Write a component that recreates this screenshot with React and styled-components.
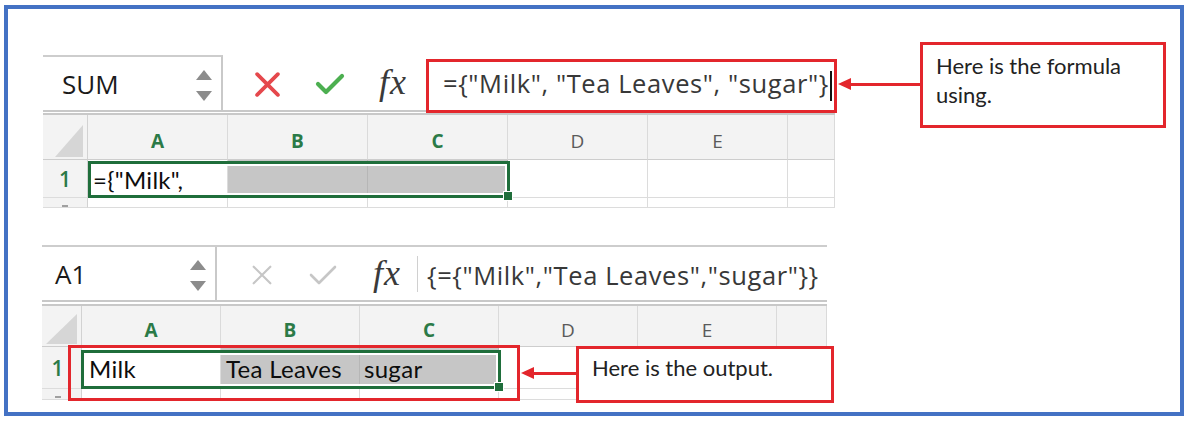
import React from "react"
import styled, { createGlobalStyle } from "styled-components"

const GlobalStyle = createGlobalStyle`
  body {
    margin: 0;
    background: #fff;
    font-family: "Open Sans", "Liberation Sans", sans-serif;
  }
`

const RED = "#e3262c"
const GREEN = "#1f6e3b"
const HEAD_GREEN = "#2b7a47"

const Frame = styled.div`
  position: relative;
  box-sizing: border-box;
  width: 1180px;
  height: 411px;
  margin: 5px 0 0 4px;
  border: 4px solid #4472c4;
  padding: 46px 0 0 35px;
  display: flex;
  flex-direction: column;
  gap: 37px;
`

const Sheet = styled.div`
  width: ${p => p.$w}px;
  margin-left: ${p => p.$shift || 0}px;
  display: flex;
  flex-direction: column;
`

const Bar = styled.div`
  box-sizing: border-box;
  display: flex;
  align-items: center;
  height: ${p => p.$h}px;
  border-top: ${p => (p.$line ? "2px solid #cdcdcd" : "none")};
`

const NameBox = styled.div`
  box-sizing: border-box;
  align-self: stretch;
  width: ${p => p.$w}px;
  display: flex;
  align-items: center;
  justify-content: space-between;
  padding: 0 ${p => p.$padR}px 0 ${p => p.$padL}px;
  border-right: 2px solid #c9c9c9;
  border-top: ${p => (p.$top ? "2px solid #cdcdcd" : "none")};
  font-size: 26px;
  color: #1a1a1a;
`

const Spinner = styled.div`
  display: flex;
  flex-direction: column;
  gap: 11px;
  padding-top: 3px;
`

const Tri = styled.span`
  width: 0;
  height: 0;
  border-left: 8px solid transparent;
  border-right: 8px solid transparent;
  ${p => (p.$down ? "border-top: 10px solid #8c8c8c;" : "border-bottom: 10px solid #8c8c8c;")}
`

const Controls = styled.div`
  display: flex;
  align-items: center;
  gap: ${p => p.$gap}px;
  padding-left: ${p => p.$pad}px;
  padding-top: 3px;
`

const Fx = styled.span`
  font-family: "Liberation Serif", "DejaVu Serif", serif;
  font-style: italic;
  font-size: 36px;
  line-height: 1;
  color: #3a3a3a;
  letter-spacing: 1px;
  margin-top: -4px;
`

const Sep = styled.span`
  width: 1px;
  height: 36px;
  margin: 0 9px 0 16px;
  background: #d0d0d0;
`

const FormulaText = styled.span`
  margin-left: ${p => p.$ml || 0}px;
  font-size: 25.5px;
  color: #383838;
  white-space: nowrap;
  letter-spacing: ${p => p.$ls || 0}px;
  padding-top: 2px;
`

const Caret = styled.span`
  display: inline-block;
  width: 2px;
  height: 30px;
  margin-left: 1px;
  background: #111;
  vertical-align: middle;
`

const Divider = styled.div`
  box-sizing: border-box;
  height: ${p => p.$h}px;
  border-top: 2px solid #c8c8c8;
  border-bottom: 2px solid #c8c8c8;
`

const Grid = styled.div`
  display: grid;
  grid-template-columns: ${p => p.$rh}px repeat(5, ${p => p.$cw}px) 1fr;
  grid-template-rows: ${p => p.$rows};
`

const Corner = styled.div`
  grid-row: 1;
  grid-column: 1;
  box-sizing: border-box;
  display: flex;
  align-items: flex-end;
  justify-content: flex-end;
  padding: 0 4px 2px 0;
  background: #f3f3f3;
  border-right: 1px solid #d2d2d2;
  border-bottom: 1px solid #cdcdcd;
`

const HeadCell = styled.div`
  grid-row: 1;
  grid-column: ${p => p.$c};
  box-sizing: border-box;
  display: flex;
  align-items: center;
  justify-content: center;
  padding-top: 8px;
  background: #f3f3f3;
  border-right: 1px solid #dadada;
  border-bottom: 1px solid #cdcdcd;
  font-size: 19px;
  font-weight: ${p => (p.$on ? 700 : 400)};
  color: ${p => (p.$on ? HEAD_GREEN : "#5a5a5a")};
`

const RowHead = styled.div`
  grid-row: ${p => p.$r};
  grid-column: 1;
  box-sizing: border-box;
  display: flex;
  align-items: ${p => (p.$cut ? "flex-start" : "center")};
  justify-content: center;
  padding: ${p => (p.$cut ? "7px" : "2px")} ${p => p.$padR || 0}px 0 0;
  overflow: hidden;
  background: #f3f3f3;
  border-right: 1px solid #d2d2d2;
  border-bottom: 1px solid #dcdcdc;
  font-size: 21px;
  font-weight: 600;
  line-height: 1;
  color: ${HEAD_GREEN};
`

const CutMark = styled.span`
  width: 6px;
  height: 2px;
  background: #a0a0a0;
`

const Cell = styled.div`
  grid-row: ${p => p.$r};
  grid-column: ${p => p.$c};
  box-sizing: border-box;
  display: flex;
  align-items: center;
  padding: 2px 0 0 ${p => p.$pl || 6}px;
  overflow: hidden;
  white-space: nowrap;
  background: ${p => (p.$shade ? "#c6c6c6" : "#fff")};
  border-right: 1px solid ${p => (p.$shade ? "#b6b6b6" : "#dcdcdc")};
  border-bottom: 1px solid #dcdcdc;
  font-family: "Lato", "Open Sans", sans-serif;
  font-size: 24px;
  color: #0d0d0d;
  letter-spacing: 0.3px;
`

const Selection = styled.div`
  grid-row: 2;
  grid-column: 2 / 5;
  position: relative;
  z-index: 2;
  margin: ${p => p.$m};
  border: 3px solid ${GREEN};
  box-shadow: inset 0 0 0 2px #fff;
`

const Handle = styled.span`
  position: absolute;
  right: -6px;
  bottom: -6px;
  width: 8px;
  height: 8px;
  background: ${GREEN};
  border: 1px solid #fff;
`

const RedBox = styled.div`
  position: absolute;
  z-index: 5;
  box-sizing: border-box;
  left: ${p => p.$x}px;
  top: ${p => p.$y}px;
  width: ${p => p.$w}px;
  height: ${p => p.$h}px;
  border: 3px solid ${RED};
`

const Arrow = styled.div`
  position: absolute;
  z-index: 5;
  display: flex;
  align-items: center;
  left: ${p => p.$x}px;
  top: ${p => p.$y}px;
  width: ${p => p.$w}px;
  height: 14px;
`

const Head = styled.span`
  width: 0;
  height: 0;
  border-top: 6px solid transparent;
  border-bottom: 6px solid transparent;
  border-right: 13px solid ${RED};
`

const Shaft = styled.span`
  flex: 1;
  height: 3px;
  background: ${RED};
`

const Callout = styled.div`
  position: absolute;
  z-index: 6;
  box-sizing: border-box;
  left: ${p => p.$x}px;
  top: ${p => p.$y}px;
  width: ${p => p.$w}px;
  height: ${p => p.$h}px;
  padding: ${p => p.$pt}px 14px 0 13px;
  border: 3px solid ${RED};
  background: #fff;
  font-family: "Lato", "Open Sans", sans-serif;
  font-size: 22px;
  line-height: 29px;
  color: #222;
`

const XIcon = ({ size, color, stroke }) => (
  <svg width={size} height={size - 2} viewBox="0 0 26 24">
    <path d="M3 2 L23 22 M23 2 L3 22" stroke={color} strokeWidth={stroke} strokeLinecap="round" fill="none" />
  </svg>
)

const CheckIcon = ({ w, color, stroke }) => (
  <svg width={w} height={22} viewBox="0 0 30 22">
    <path d="M3 11 L11 19 L27 3" stroke={color} strokeWidth={stroke} strokeLinecap="round" strokeLinejoin="round" fill="none" />
  </svg>
)

const CornerTri = ({ w, h }) => (
  <svg width={w} height={h} viewBox={`0 0 ${w} ${h}`}>
    <polygon points={`${w},0 ${w},${h} 0,${h}`} fill="#d6d6d6" />
  </svg>
)

const LETTERS = ["A", "B", "C", "D", "E", ""]

function Spread({ rh, cw, rows, sel, cells, cornerW, cornerH, rowPad }) {
  return (
    <Grid $rh={rh} $cw={cw} $rows={rows}>
      <Corner>
        <CornerTri w={cornerW} h={cornerH} />
      </Corner>
      {LETTERS.map((l, i) => (
        <HeadCell key={i} $c={i + 2} $on={i < 3}>
          {l}
        </HeadCell>
      ))}
      <RowHead $r={2} $padR={rowPad}>1</RowHead>
      {cells.map((c, i) => (
        <Cell key={i} $r={2} $c={i + 2} $shade={c.shade} $pl={c.pl}>
          {c.text}
        </Cell>
      ))}
      <Selection $m={sel}>
        <Handle />
      </Selection>
      <RowHead $r={3} $cut $padR={rowPad}>
        <CutMark />
      </RowHead>
      {LETTERS.map((l, i) => (
        <Cell key={i} $r={3} $c={i + 2} />
      ))}
    </Grid>
  )
}

export default function App() {
  return (
    <>
      <GlobalStyle />
      <Frame>
        <Sheet $w={792}>
          <Bar $h={55}>
            <NameBox $w={180} $padL={19} $padR={9} $top>
              SUM
              <Spinner>
                <Tri />
                <Tri $down />
              </Spinner>
            </NameBox>
            <Controls $pad={31} $gap={33}>
              <XIcon size={27} color="#e5484c" stroke={3.6} />
              <CheckIcon w={32} color="#4caf50" stroke={4.2} />
              <Fx>fx</Fx>
            </Controls>
            <FormulaText $ml={36} $ls={0.6}>
              ={"{"}"Milk", "Tea Leaves", "sugar"{"}"}
              <Caret />
            </FormulaText>
          </Bar>
          <Divider $h={5} />
          <Spread
            rh={45}
            cw={140}
            rows="45px 38px 10px"
            sel="1px -2px 0 0"
            cornerW={28}
            cornerH={32}
            rowPad={0}
            cells={[
              { text: '={"Milk",', pl: 5 },
              { shade: true },
              { shade: true },
              {},
              {},
              {},
            ]}
          />
        </Sheet>

        <Sheet $w={785} $shift={-1}>
          <Bar $h={55} $line>
            <NameBox $w={175} $padL={13} $padR={9}>
              A1
              <Spinner>
                <Tri />
                <Tri $down />
              </Spinner>
            </NameBox>
            <Controls $pad={34} $gap={35}>
              <XIcon size={22} color="#c6c6c6" stroke={2.6} />
              <CheckIcon w={30} color="#c6c6c6" stroke={2.6} />
              <Fx>fx</Fx>
            </Controls>
            <Sep />
            <FormulaText $ls={0.6}>
              {'{={"Milk","Tea Leaves","sugar"}}'}
            </FormulaText>
          </Bar>
          <Divider $h={6} />
          <Spread
            rh={40}
            cw={139}
            rows="41px 42px 11px"
            sel="3px -2px 0 -1px"
            cornerW={31}
            cornerH={30}
            rowPad={8}
            cells={[
              { text: "Milk", pl: 7 },
              { text: "Tea Leaves", shade: true, pl: 5 },
              { text: "sugar", shade: true, pl: 4 },
              {},
              {},
              {},
            ]}
          />
        </Sheet>

        <RedBox $x={418} $y={50} $w={411} $h={54} />
        <Arrow $x={830} $y={68} $w={84}>
          <Head />
          <Shaft />
        </Arrow>
        <Callout $x={912} $y={33} $w={246} $h={86} $pt={6}>
          Here is the formula using.
        </Callout>

        <RedBox $x={60} $y={336} $w={452} $h={56} />
        <Arrow $x={513} $y={357} $w={57}>
          <Head />
          <Shaft />
        </Arrow>
        <Callout $x={568} $y={337} $w={258} $h={57} $pt={4}>
          Here is the output.
        </Callout>
      </Frame>
    </>
  )
}
